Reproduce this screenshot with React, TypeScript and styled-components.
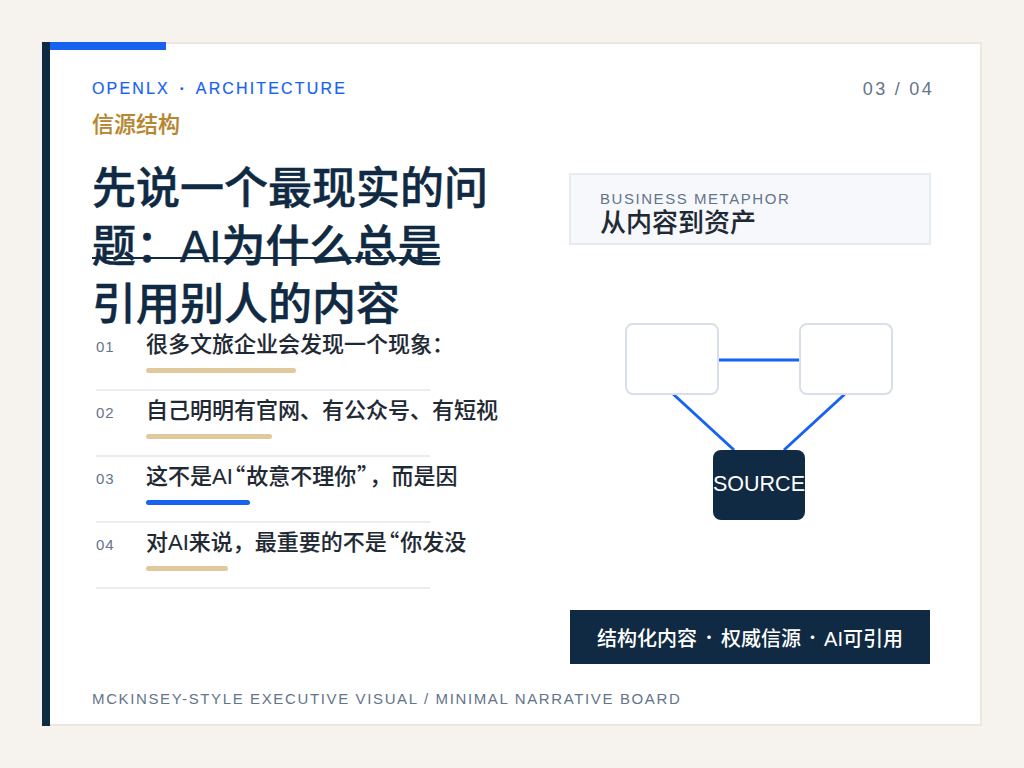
import { createGlobalStyle, styled } from 'styled-components';

const GlobalStyle = createGlobalStyle`
  html, body { margin: 0; padding: 0; background: #f6f3ee; }
  body { font-family: "Liberation Sans", "Noto Sans CJK SC", sans-serif; }
`;

const Page = styled.div`
  width: 1024px;
  height: 768px;
  padding: 42px;
  box-sizing: border-box;
`;

const Slide = styled.section`
  position: relative;
  width: 940px;
  height: 684px;
  box-sizing: border-box;
  padding: 35px 46px 0 50px;
  background: #fff;
  border: 2px solid #ebe7df;
  border-left: 0;
  display: flex;
  flex-direction: column;
`;

const SideBar = styled.div`
  position: absolute;
  left: 0;
  top: -2px;
  bottom: -2px;
  width: 8px;
  background: #102a43;
`;

const TopBar = styled.div`
  position: absolute;
  left: 8px;
  top: -2px;
  width: 116px;
  height: 8px;
  background: #1763f0;
`;

const Header = styled.header`
  display: flex;
  justify-content: space-between;
  align-items: center;
  height: 20px;
`;

const Eyebrow = styled.div`
  font-size: 16px;
  line-height: 20px;
  letter-spacing: 2.15px;
  color: #1763f0;
  -webkit-text-stroke: 0.2px #1763f0;
  white-space: nowrap;
`;

const PageNo = styled.div`
  font-size: 18px;
  letter-spacing: 2.3px;
  color: #64748b;
  white-space: pre;
`;

const Dot = styled.span<{ $w: number }>`
  display: inline-block;
  width: ${(p) => p.$w}px;
  text-align: center;
  font-size: 0.75em;
  line-height: 0;
  font-family: "Noto Sans CJK SC", sans-serif;
  font-feature-settings: "palt";
`;

const Label = styled.div`
  margin-top: 10px;
  font-size: 22px;
  line-height: 32px;
  font-weight: 500;
  color: #b7862f;
  -webkit-text-stroke: 0.2px #b7862f;
`;

const Body = styled.div`
  display: flex;
  flex: 1;
  min-height: 0;
`;

const Left = styled.div`
  width: 478px;
  flex: none;
`;

const Title = styled.h1`
  margin: 19px 0 0;
  height: 165px;
  font-size: 44px;
  line-height: 58px;
  font-weight: 500;
  color: #102a43;
  -webkit-text-stroke: 0.5px #102a43;
`;

const Struck = styled.span`
  position: relative;

  &::after {
    content: '';
    position: absolute;
    left: 0;
    right: 2px;
    bottom: 12px;
    height: 2px;
    background: #102a43;
  }
`;

const List = styled.ol`
  list-style: none;
  margin: 0 0 0 4px;
  padding: 0;
  width: 334px;
`;

const Row = styled.li`
  display: flex;
  height: 66px;
  padding-top: 5px;
  box-sizing: border-box;
  border-bottom: 2px solid #e9edf2;
`;

const Num = styled.div`
  width: 50px;
  flex: none;
  padding-top: 6px;
  font-size: 15px;
  line-height: 22px;
  letter-spacing: 1px;
  color: #64748b;
`;

const RowBody = styled.div`
  display: flex;
  flex-direction: column;
  gap: 8px;
`;

const RowText = styled.div`
  font-size: 22px;
  line-height: 30px;
  font-weight: 500;
  color: #1f2933;
  -webkit-text-stroke: 0.1px #1f2933;
  white-space: nowrap;
`;

const Quote = styled.span`
  margin: 0 1.2px;
  line-height: 0;
  font-family: "Noto Sans CJK SC", sans-serif;
  font-feature-settings: "palt";
`;

const Bar = styled.div<{ $w: number; $blue?: boolean }>`
  width: ${(p) => p.$w}px;
  height: 5px;
  border-radius: 3px;
  background: ${(p) => (p.$blue ? '#1763f0' : '#e0c99c')};
`;

const Right = styled.div`
  width: 360px;
  flex: none;
  display: flex;
  flex-direction: column;
`;

const Metaphor = styled.div`
  margin: 32px -1px -1px;
  height: 72px;
  box-sizing: border-box;
  padding: 15px 29px 0;
  background: #f6f8fc;
  border: 2px solid #e6eaf1;
`;

const MetaLabel = styled.div`
  font-size: 15px;
  line-height: 18px;
  letter-spacing: 1.55px;
  color: #64748b;
`;

const MetaTitle = styled.div`
  font-size: 26px;
  line-height: 30px;
  font-weight: 500;
  color: #1f2933;
  -webkit-text-stroke: 0.1px #1f2933;
`;

const Diagram = styled.div`
  position: relative;
  height: 366px;
`;

const Lines = styled.svg`
  position: absolute;
  inset: 0;
`;

const Node = styled.div<{ $x: number; $y: number }>`
  position: absolute;
  left: ${(p) => p.$x}px;
  top: ${(p) => p.$y}px;
  width: 94px;
  height: 72px;
  box-sizing: border-box;
  background: #fff;
  border: 2px solid #d9dfe9;
  border-radius: 8px;
`;

const SourceNode = styled.div`
  position: absolute;
  left: 143px;
  top: 206px;
  width: 92px;
  height: 70px;
  box-sizing: border-box;
  padding-bottom: 2px;
  border-radius: 8px;
  background: #102a43;
  color: #fff;
  font-size: 21.5px;
  display: flex;
  align-items: center;
  justify-content: center;
  white-space: nowrap;
`;

const Strip = styled.div`
  height: 54px;
  display: flex;
  align-items: center;
  justify-content: center;
  background: #102a43;
  color: #fff;
  font-size: 20px;
  font-weight: 500;
  white-space: nowrap;
`;

const Footer = styled.footer`
  height: 60px;
  box-sizing: border-box;
  padding-top: 8px;
  display: flex;
  align-items: center;
  font-size: 15px;
  letter-spacing: 1.63px;
  color: #64748b;
  white-space: nowrap;
`;

const rows = [
  { n: '01', text: <>很多文旅企业会发现一个现象：</>, w: 150 },
  { n: '02', text: <>自己明明有官网、有公众号、有短视</>, w: 126 },
  { n: '03', text: <>这不是AI<Quote>“</Quote>故意不理你<Quote>”</Quote>，而是因</>, w: 104, blue: true },
  { n: '04', text: <>对AI来说，最重要的不是<Quote>“</Quote>你发没</>, w: 82 },
];

export default function App() {
  return (
    <Page>
      <GlobalStyle />
      <Slide>
        <SideBar />
        <TopBar />
        <Header>
          <Eyebrow>OPENLX<Dot $w={26}>·</Dot>ARCHITECTURE</Eyebrow>
          <PageNo>03 / 04</PageNo>
        </Header>
        <Label>信源结构</Label>
        <Body>
          <Left>
            <Title>
              先说一个最现实的问
              <br />
              <Struck>题：AI为什么总是</Struck>
              <br />
              引用别人的内容
            </Title>
            <List>
              {rows.map((r) => (
                <Row key={r.n}>
                  <Num>{r.n}</Num>
                  <RowBody>
                    <RowText>{r.text}</RowText>
                    <Bar $w={r.w} $blue={r.blue} />
                  </RowBody>
                </Row>
              ))}
            </List>
          </Left>
          <Right>
            <Metaphor>
              <MetaLabel>BUSINESS METAPHOR</MetaLabel>
              <MetaTitle>从内容到资产</MetaTitle>
            </Metaphor>
            <Diagram>
              <Lines width="360" height="366" viewBox="0 0 360 366">
                <g stroke="#1763f0" strokeWidth="3" fill="none">
                  <line x1="149" y1="116" x2="229" y2="116" />
                  <line x1="102" y1="149" x2="164" y2="206" />
                  <line x1="276" y1="149" x2="214" y2="206" />
                </g>
              </Lines>
              <Node $x={55} $y={79} />
              <Node $x={229} $y={79} />
              <SourceNode>SOURCE</SourceNode>
            </Diagram>
            <Strip>
              结构化内容<Dot $w={24}>·</Dot>权威信源<Dot $w={23}>·</Dot>AI可引用
            </Strip>
          </Right>
        </Body>
        <Footer>MCKINSEY-STYLE EXECUTIVE VISUAL / MINIMAL NARRATIVE BOARD</Footer>
      </Slide>
    </Page>
  );
}
